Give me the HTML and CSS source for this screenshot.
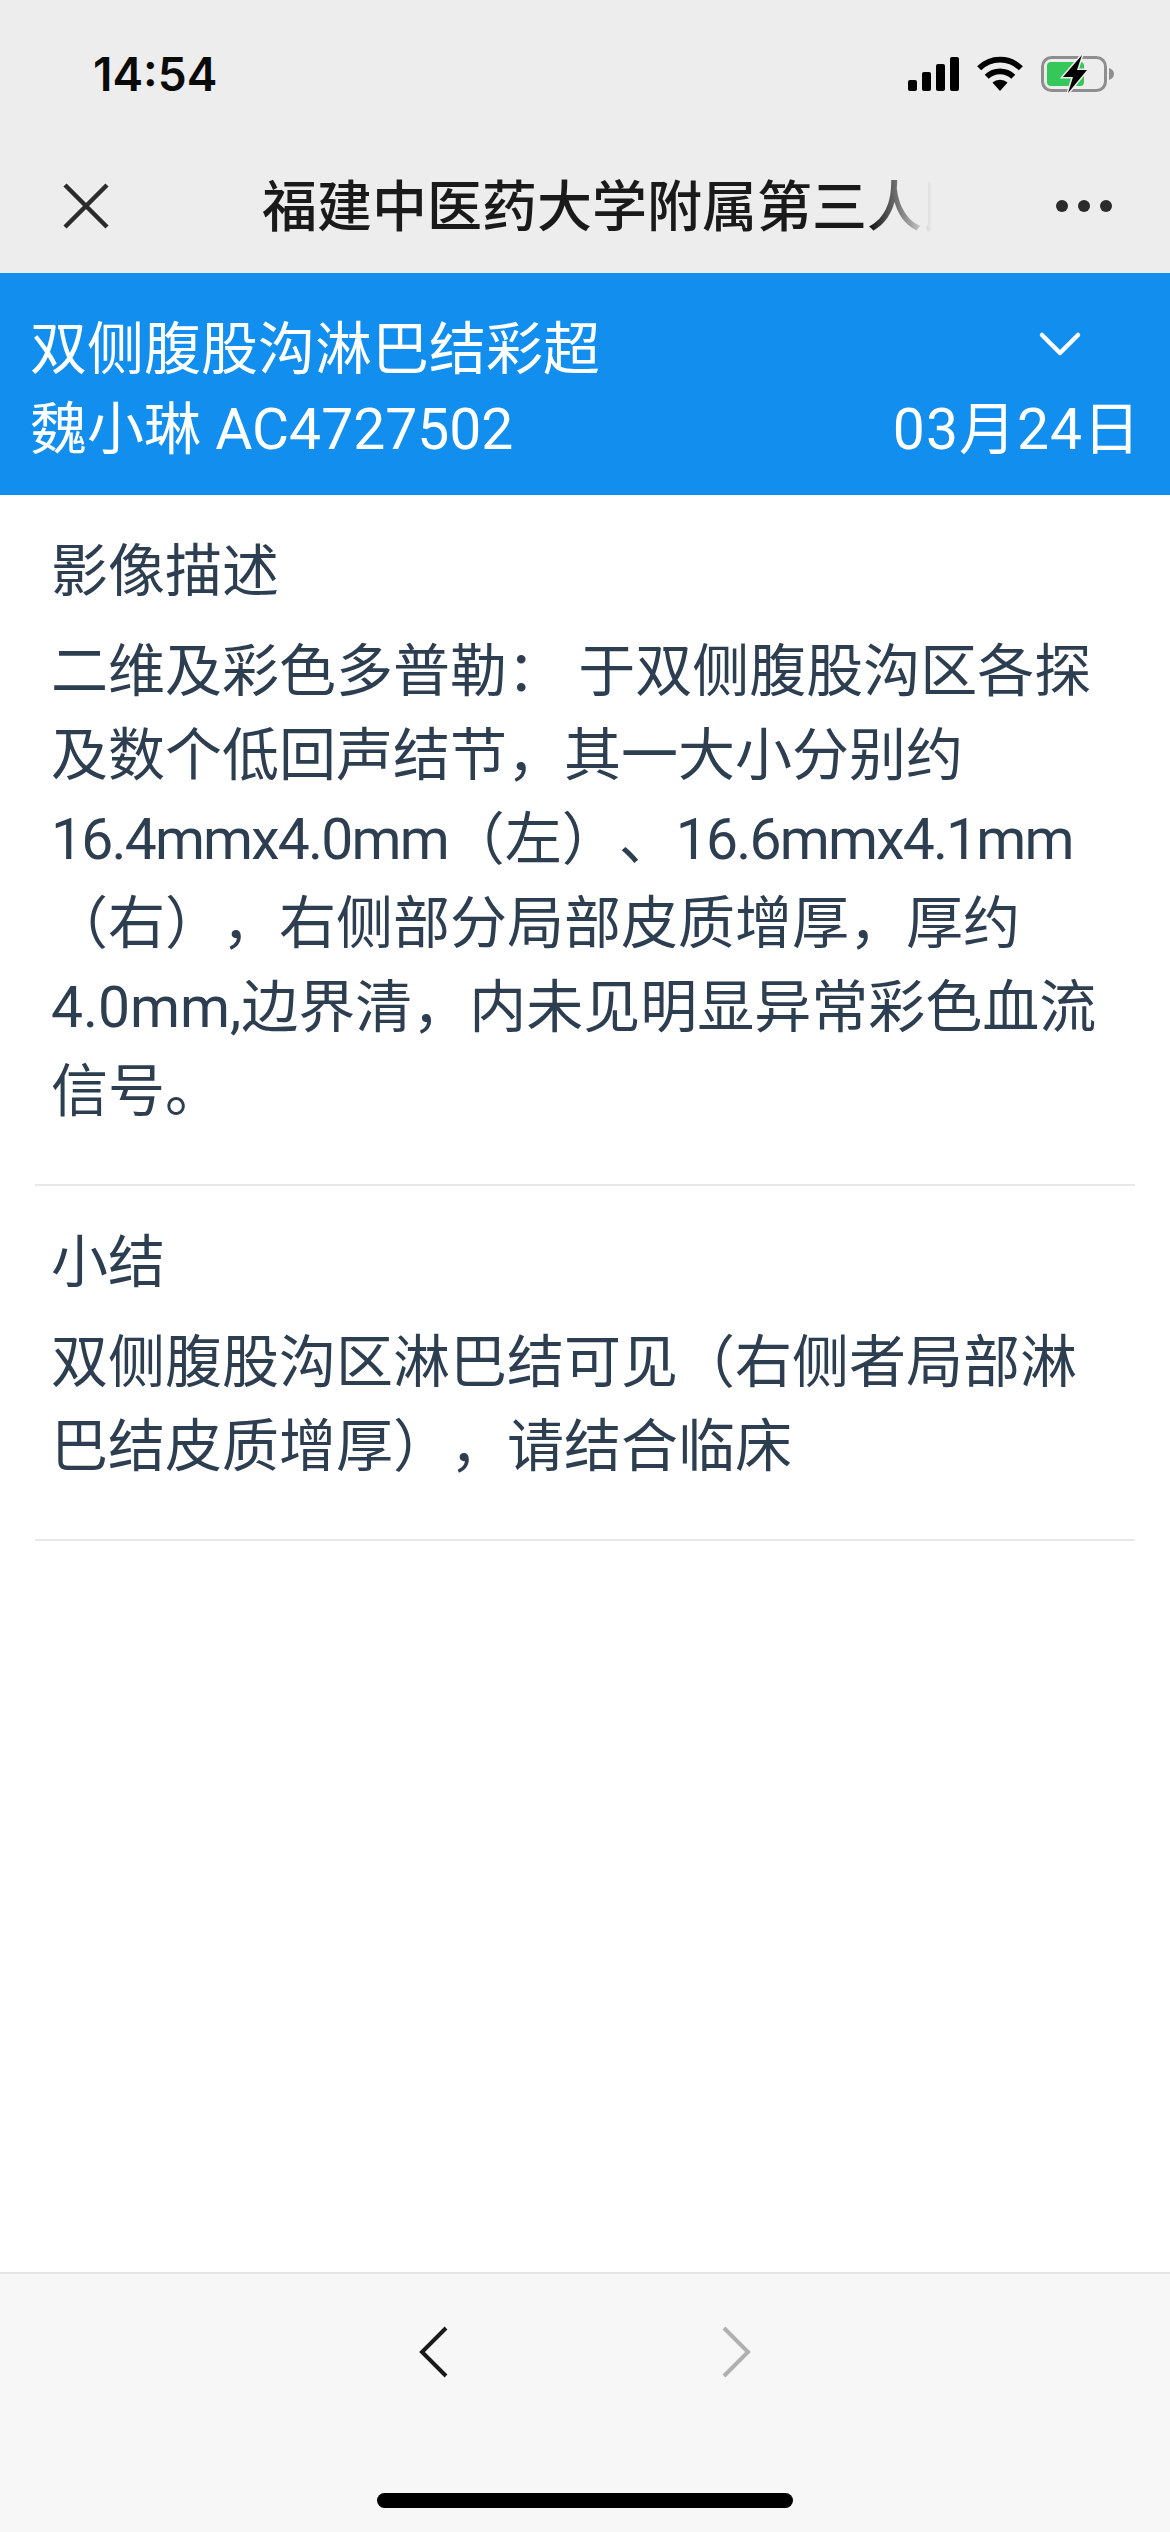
FILE: index.html
```html
<!DOCTYPE html>
<html lang="zh">
<head>
    <meta charset="utf-8">
    <title>福建中医药大学附属第三人民医院</title>
    <link rel="stylesheet" href="styles.css">
</head>
<body>
    <div class="statusBar">
        <span class="time">14:54</span>
        <div class="statusIcons">
            <svg class="signal" width="51" height="36" viewBox="0 0 51 36">
                <rect x="0" y="24" width="9" height="11" rx="2"/>
                <rect x="14" y="16" width="9" height="19" rx="2"/>
                <rect x="28" y="8" width="9" height="27" rx="2"/>
                <rect x="42" y="1" width="9" height="34" rx="2"/>
            </svg>
            <svg class="wifi" width="48" height="36" viewBox="0 0 50 38">
                <path d="M25 37 L17 28 A12 12 0 0 1 33 28 Z"/>
                <path d="M11 22 A20 20 0 0 1 39 22" fill="none" stroke="#000" stroke-width="6"/>
                <path d="M3 13 A31 31 0 0 1 47 13" fill="none" stroke="#000" stroke-width="6"/>
            </svg>
            <svg class="battery" width="74" height="42" viewBox="0 0 74 42">
                <rect x="1.5" y="4.5" width="63" height="33" rx="9" fill="none" stroke="#8e8e8e" stroke-width="3"/>
                <path d="M68 15 C71 16 73 18 73 21 C73 24 71 26 68 27 Z" fill="#8e8e8e"/>
                <rect x="6" y="9" width="37" height="24" rx="4" fill="#34c759"/>
                <path d="M41 2 L22 24 H32 L27 40 L46 17 H36 Z" fill="#000" stroke="#ededed" stroke-width="3" paint-order="stroke"/>
            </svg>
        </div>
    </div>

    <div class="navBar">
        <svg class="navIcon" width="50" height="50" viewBox="0 0 50 50">
            <path d="M4 4 L46 46 M46 4 L4 46" stroke="#2b2b2b" stroke-width="4.5" fill="none"/>
        </svg>
        <div class="navTitle">福建中医药大学附属第三人民医院</div>
        <div class="navMore"><i></i><i></i><i></i></div>
    </div>

    <div class="reportHead">
        <div class="headRow">
            <span>双侧腹股沟淋巴结彩超</span>
            <svg class="chevron" width="46" height="28" viewBox="0 0 46 28">
                <path d="M5 4 L23 22 L41 4" stroke="#fff" stroke-width="4.5" stroke-linecap="round" stroke-linejoin="round" fill="none"/>
            </svg>
        </div>
        <div class="headRow">
            <span>魏小琳 AC4727502</span>
            <span class="headDate">03月24日</span>
        </div>
    </div>

    <div class="content">
        <div class="section">
            <div class="sectionTitle">影像描述</div>
            <p>二维及彩色多普勒： 于双侧腹股沟区各探及数个低回声结节，其一大小分别约<span class="size">16.4mmx4.0mm</span>（左）、<span class="size">16.6mmx4.1mm</span>（右），右侧部分局部皮质增厚，厚约4.0mm,边界清，内未见明显异常彩色血流信号。</p>
        </div>
        <div class="section">
            <div class="sectionTitle">小结</div>
            <p>双侧腹股沟区淋巴结可见（右侧者局部淋巴结皮质增厚），请结合临床</p>
        </div>
    </div>

    <div class="toolBar">
        <div class="toolArrows">
            <svg width="30" height="52" viewBox="0 0 30 52">
                <path d="M27 2 L3 26 L27 50" stroke="#1a1a1a" stroke-width="4" fill="none"/>
            </svg>
            <svg width="30" height="52" viewBox="0 0 30 52">
                <path d="M3 2 L27 26 L3 50" stroke="#b0b0b0" stroke-width="4" fill="none"/>
            </svg>
        </div>
        <div class="homeBar"></div>
    </div>
</body>
</html>
```

FILE: styles.css
```css
* {
    box-sizing: border-box;
}
body {
    margin: 0;
    width: 1170px;
    height: 2532px;
    display: flex;
    flex-direction: column;
    background-color: #fff;
    font-family: Roboto, "Noto Sans CJK SC", sans-serif;
    text-spacing-trim: space-all;
    overflow: hidden;
}
.statusBar {
    height: 129px;
    padding: 53px 55px 0 93px;
    display: flex;
    justify-content: space-between;
    align-items: flex-start;
    background-color: #ededed;
}
.time {
    margin-top: 1px;
    font-family: Inter, sans-serif;
    font-size: 46px;
    line-height: 40px;
    font-weight: 600;
    color: #0a0a0a;
}
.statusIcons {
    display: flex;
    align-items: center;
    gap: 17px;
}
.navBar {
    height: 144px;
    padding: 10px 58px 0 61px;
    display: flex;
    align-items: center;
    background-color: #ededed;
}
.navIcon {
    flex: none;
}
.navTitle {
    width: 670px;
    margin-left: 151px;
    margin-bottom: 8px;
    overflow: hidden;
    white-space: nowrap;
    font-size: 55px;
    font-weight: 500;
    color: #1a1a1a;
    -webkit-mask-image: linear-gradient(to right, #000 91%, transparent 100%);
    mask-image: linear-gradient(to right, #000 91%, transparent 100%);
}
.navMore {
    margin-left: auto;
    display: flex;
    gap: 10px;
}
.navMore i {
    width: 12px;
    height: 12px;
    border-radius: 50%;
    background-color: #2b2b2b;
}
.reportHead {
    height: 222px;
    padding: 37px 29px 0 30px;
    background-color: #118eee;
    color: #fff;
    font-size: 57px;
    line-height: 80px;
}
.headRow {
    display: flex;
    justify-content: space-between;
    align-items: center;
}
.headDate {
    letter-spacing: 1px;
}
.chevron {
    margin-right: 58px;
    margin-bottom: 10px;
}
.content {
    flex: 1;
    padding: 0 35px;
}
.section {
    padding: 35px 16px 50px;
    border-bottom: 2px solid #e8e8e8;
    color: #2c3e50;
    font-size: 57px;
    line-height: 84px;
}
.sectionTitle {
    margin-bottom: 16px;
}
.section p {
    margin: 0;
}
.size {
    letter-spacing: -1.8px;
}
.toolBar {
    height: 260px;
    border-top: 2px solid #e5e5e5;
    background-color: #f7f7f7;
    display: flex;
    flex-direction: column;
    align-items: center;
}
.toolArrows {
    margin-top: 52px;
    width: 332px;
    display: flex;
    justify-content: space-between;
}
.homeBar {
    width: 416px;
    height: 15px;
    margin-top: 115px;
    border-radius: 8px;
    background-color: #000;
}
```
